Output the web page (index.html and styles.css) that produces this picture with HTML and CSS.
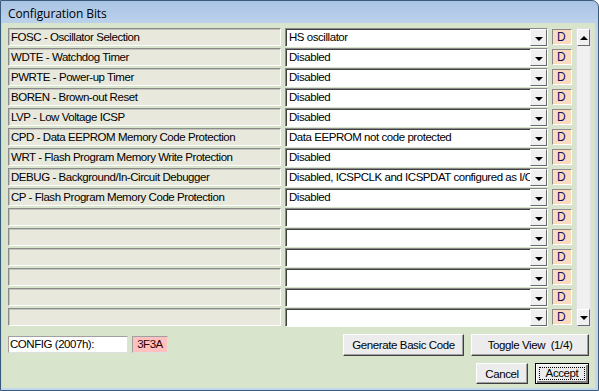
FILE: index.html
```html
<!DOCTYPE html>
<html lang="en">
<head>
  <meta charset="UTF-8">
  <title>Configuration Bits</title>
  <link rel="stylesheet" href="styles.css">
</head>
<body>
  <div class="window">
    <div class="titlebar">Configuration Bits</div>
    <div class="client">
      <div class="grid-area">
        <div class="rows">
          <div class="row"><div class="label">FOSC - Oscillator Selection</div><div class="combo"><span class="value">HS oscillator</span><span class="drop"></span></div><div class="dbox">D</div></div>
          <div class="row"><div class="label">WDTE - Watchdog Timer</div><div class="combo"><span class="value">Disabled</span><span class="drop"></span></div><div class="dbox">D</div></div>
          <div class="row"><div class="label">PWRTE - Power-up Timer</div><div class="combo"><span class="value">Disabled</span><span class="drop"></span></div><div class="dbox">D</div></div>
          <div class="row"><div class="label">BOREN - Brown-out Reset</div><div class="combo"><span class="value">Disabled</span><span class="drop"></span></div><div class="dbox">D</div></div>
          <div class="row"><div class="label">LVP - Low Voltage ICSP</div><div class="combo"><span class="value">Disabled</span><span class="drop"></span></div><div class="dbox">D</div></div>
          <div class="row"><div class="label">CPD - Data EEPROM Memory Code Protection</div><div class="combo"><span class="value">Data EEPROM not code protected</span><span class="drop"></span></div><div class="dbox">D</div></div>
          <div class="row"><div class="label">WRT - Flash Program Memory Write Protection</div><div class="combo"><span class="value">Disabled</span><span class="drop"></span></div><div class="dbox">D</div></div>
          <div class="row"><div class="label">DEBUG - Background/In-Circuit Debugger</div><div class="combo"><span class="value">Disabled, ICSPCLK and ICSPDAT configured as I/O</span><span class="drop"></span></div><div class="dbox">D</div></div>
          <div class="row"><div class="label">CP - Flash Program Memory Code Protection</div><div class="combo"><span class="value">Disabled</span><span class="drop"></span></div><div class="dbox">D</div></div>
          <div class="row"><div class="label"></div><div class="combo"><span class="value"></span><span class="drop"></span></div><div class="dbox">D</div></div>
          <div class="row"><div class="label"></div><div class="combo"><span class="value"></span><span class="drop"></span></div><div class="dbox">D</div></div>
          <div class="row"><div class="label"></div><div class="combo"><span class="value"></span><span class="drop"></span></div><div class="dbox">D</div></div>
          <div class="row"><div class="label"></div><div class="combo"><span class="value"></span><span class="drop"></span></div><div class="dbox">D</div></div>
          <div class="row"><div class="label"></div><div class="combo"><span class="value"></span><span class="drop"></span></div><div class="dbox">D</div></div>
          <div class="row"><div class="label"></div><div class="combo"><span class="value"></span><span class="drop"></span></div><div class="dbox">D</div></div>
        </div>
        <div class="scrollbar">
          <div class="sb-btn"><span class="tri-up"></span></div>
          <div class="sb-track"></div>
          <div class="sb-btn"><span class="tri-down"></span></div>
        </div>
      </div>

      <div class="bottom">
        <div class="config-line">
          <div class="config-name">CONFIG (2007h):</div>
          <div class="config-value">3F3A</div>
        </div>
        <div class="buttons">
          <div class="btn-row">
            <button class="btn btn-gen">Generate Basic Code</button>
            <button class="btn btn-toggle">Toggle View  (1/4)</button>
          </div>
          <div class="btn-row">
            <button class="btn btn-cancel">Cancel</button>
            <button class="btn btn-accept"><span class="focus">Accept</span></button>
          </div>
        </div>
      </div>
    </div>
  </div>
</body>
</html>
```

FILE: styles.css
```css
/* reset */
html, body { margin: 0; padding: 0; background: #fff; }
body { font-family: "Liberation Sans", Arial, sans-serif; font-size: 11.5px; letter-spacing: -0.45px; color: #000; }

/* window frame */
.window {
  width: 599px;
  height: 391px;
  box-sizing: border-box;
  border: 1px solid #3a5a7c;
  border-top-right-radius: 7px;
  background: linear-gradient(#a9c4e3, #c2d6ee 30px, #c2d6ee);
  display: flex;
  flex-direction: column;
  overflow: hidden;
}
.titlebar {
  height: 22px;
  padding-left: 7px;
  font-family: "Open Sans", "Noto Sans", sans-serif;
  font-size: 12px;
  letter-spacing: -0.1px;
  line-height: 25px;
  color: #000;
}
.client {
  flex: 1;
  margin: 0 3px 2px 1px;
  background: #d8e4cc;
  padding: 5px 4px 0 6px;
  display: flex;
  flex-direction: column;
}

/* rows */
.grid-area { display: flex; gap: 4px; }
.rows { display: flex; flex-direction: column; }
.row {
  height: 20px;
  display: flex;
  gap: 4px;
  align-items: flex-start;
}
.label {
  width: 273px;
  height: 18px;
  box-sizing: border-box;
  background: #e8e8dc;
  border: 1px solid;
  border-color: #8a8a8a #fff #fff #8a8a8a;
  box-shadow: inset 1px 1px 0 #c4c4bc;
  padding-left: 2px;
  line-height: 16px;
  white-space: nowrap;
  overflow: hidden;
}
.combo {
  width: 263px;
  height: 19px;
  box-sizing: border-box;
  background: #fff;
  border: 1px solid;
  border-color: #8a8a8a #fff #fff #8a8a8a;
  box-shadow: inset 1px 1px 0 #404040;
  display: flex;
}
.combo .value {
  flex: 1;
  padding-left: 3px;
  line-height: 17px;
  white-space: nowrap;
  overflow: hidden;
}
.drop {
  width: 17px;
  height: 17px;
  box-sizing: border-box;
  background: #f0f0f0;
  border: 1px solid;
  border-color: #fff #696969 #696969 #fff;
  display: flex;
  align-items: center;
  justify-content: center;
}
.drop::after {
  content: "";
  margin-top: 3px;
  border-left: 4px solid transparent;
  border-right: 4px solid transparent;
  border-top: 4px solid #000;
}
.dbox {
  width: 20px;
  height: 16px;
  margin-top: 1px;
  box-sizing: border-box;
  background: #fcdcc0;
  border: 1px solid;
  border-color: #8a8a8a #fff #fff #8a8a8a;
  padding-left: 4px;
  font-size: 12px;
  letter-spacing: 0;
  line-height: 14px;
  color: #10106a;
}

/* scrollbar */
.scrollbar {
  width: 17px;
  height: 299px;
  display: flex;
  flex-direction: column;
  background: #ececec;
  border: 1px solid #e0e0e0;
  box-sizing: border-box;
}
.sb-track { flex: 1; background: #f0f0f0; }
.sb-btn {
  height: 17px;
  box-sizing: border-box;
  background: #f0f0f0;
  border: 1px solid;
  border-color: #fff #696969 #696969 #fff;
  display: flex;
  align-items: center;
  justify-content: center;
}
.tri-up {
  border-left: 4px solid transparent;
  border-right: 4px solid transparent;
  border-bottom: 4px solid #000;
}
.tri-down {
  border-left: 4px solid transparent;
  border-right: 4px solid transparent;
  border-top: 4px solid #000;
}

/* bottom */
.bottom {
  display: flex;
  justify-content: space-between;
  padding-top: 6px;
  padding-right: 2px;
}
.config-line { display: flex; gap: 4px; margin-top: 2px; height: 17px; }
.config-name {
  width: 120px;
  box-sizing: border-box;
  background: #fff;
  border: 1px solid;
  border-color: #a0a0a0 #e0e0e0 #e0e0e0 #a0a0a0;
  line-height: 15px;
  padding-left: 1px;
}
.config-value {
  width: 36px;
  box-sizing: border-box;
  background: #ffc0c0;
  border: 1px solid;
  border-color: #a0a0a0 #e0e0e0 #e0e0e0 #a0a0a0;
  line-height: 15px;
  text-align: center;
  color: #300000;
}
.buttons { display: flex; flex-direction: column; align-items: flex-end; gap: 7px; }
.btn-row { display: flex; gap: 7px; }
.btn {
  font-family: "Liberation Sans", Arial, sans-serif;
  font-size: 11.5px;
  letter-spacing: -0.4px;
  color: #000;
  background: #ececec;
  border: 1px solid;
  border-color: #fff #404040 #404040 #fff;
  box-shadow: inset -1px -1px 0 #a0a0a0;
  padding: 0;
  margin: 0;
  white-space: pre;
}
.btn-gen { width: 121px; height: 22px; }
.btn-toggle { width: 118px; height: 22px; }
.btn-cancel { width: 52px; height: 21px; }
.btn-accept {
  width: 54px;
  height: 21px;
  border: 1px solid #000;
  box-shadow: inset 1px 1px 0 #fff, inset -2px -2px 0 #808080;
  display: flex;
  align-items: stretch;
  padding: 3px;
}
.btn-accept .focus {
  flex: 1;
  border: 1px dotted #000;
  line-height: 11px;
}
```
